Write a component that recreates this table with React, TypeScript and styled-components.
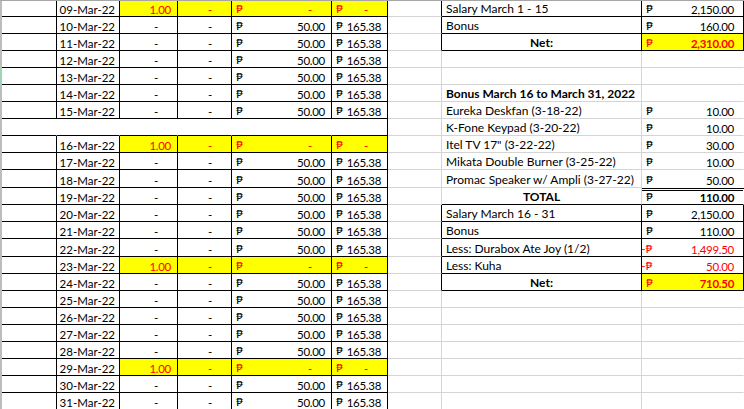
import React from "react";
import styled, { createGlobalStyle } from "styled-components";

const GlobalStyle = createGlobalStyle`
  html, body {
    margin: 0;
    padding: 0;
    background: #ffffff;
  }
  body {
    font-family: Lato, "Noto Sans", "DejaVu Sans", sans-serif;
  }
`;

const BLACK = "#000000";
const GRID = "#d4d4d4";
const YELLOW = "#ffff00";
const RED = "#ff0000";

// excel rows are not all the same height at this zoom
const ROW_HEIGHTS = [16, 17, 17, 17, 17, 17, 17, 17, 17, 17, 18, 17, 17, 17, 18, 17, 17, 17, 17, 17, 17, 17, 17, 17];
const COL_WIDTHS = [2, 55, 63, 58, 54, 100, 56, 54, 200, 102];

type Day = { date?: string; off?: boolean };

const days: Day[] = [
  { date: "09-Mar-22", off: true },
  { date: "10-Mar-22" },
  { date: "11-Mar-22" },
  { date: "12-Mar-22" },
  { date: "13-Mar-22" },
  { date: "14-Mar-22" },
  { date: "15-Mar-22" },
  {},
  { date: "16-Mar-22", off: true },
  { date: "17-Mar-22" },
  { date: "18-Mar-22" },
  { date: "19-Mar-22" },
  { date: "20-Mar-22" },
  { date: "21-Mar-22" },
  { date: "22-Mar-22" },
  { date: "23-Mar-22", off: true },
  { date: "24-Mar-22" },
  { date: "25-Mar-22" },
  { date: "26-Mar-22" },
  { date: "27-Mar-22" },
  { date: "28-Mar-22" },
  { date: "29-Mar-22", off: true },
  { date: "30-Mar-22" },
  { date: "31-Mar-22" },
];

type Line = {
  label?: string;
  amount?: string;
  center?: boolean;
  bold?: boolean;
  neg?: boolean;
  net?: boolean;
  box?: boolean;
  total?: boolean;
  open?: boolean;
};

const summary: Line[] = [
  { label: "Salary March 1 - 15", amount: "2,150.00", box: true },
  { label: "Bonus", amount: "160.00", box: true },
  { label: "Net:", amount: "2,310.00", center: true, bold: true, net: true, box: true },
  {},
  {},
  { label: "Bonus March 16 to March 31, 2022", bold: true },
  { label: "Eureka Deskfan (3-18-22)", amount: "10.00" },
  { label: "K-Fone Keypad (3-20-22)", amount: "10.00" },
  { label: 'Itel TV 17" (3-22-22)', amount: "30.00" },
  { label: "Mikata Double Burner (3-25-22)", amount: "10.00" },
  { label: "Promac Speaker w/ Ampli (3-27-22)", amount: "50.00", open: true },
  { label: "TOTAL", amount: "110.00", center: true, bold: true, total: true },
  { label: "Salary March 16 - 31", amount: "2,150.00", box: true },
  { label: "Bonus", amount: "110.00", box: true },
  { label: "Less: Durabox Ate Joy (1/2)", amount: "1,499.50", neg: true, box: true },
  { label: "Less: Kuha", amount: "50.00", neg: true, box: true },
  { label: "Net:", amount: "710.50", center: true, bold: true, net: true, box: true },
  {},
  {},
  {},
  {},
  {},
  {},
  {},
];

const Sheet = styled.div`
  display: grid;
  grid-template-columns: ${COL_WIDTHS.map((w) => `${w}px`).join(" ")};
  grid-template-rows: ${ROW_HEIGHTS.map((h) => `${h}px`).join(" ")};
  width: 744px;
  height: 409px;
  overflow: hidden;
  border-top: 1px solid #a6a6a6;
  font-size: 12px;
  color: ${BLACK};
`;

const RowHeader = styled.div<{ $selected?: boolean }>`
  background: ${(p) => (p.$selected ? "#9fd5b7" : "#bdbdbd")};
`;

type CellProps = {
  $right?: string;
  $bottom?: string;
  $doubleTop?: boolean;
  $bg?: string;
  $color?: string;
  $bold?: boolean;
  $align?: "left" | "center" | "right";
};

const Cell = styled.div<CellProps>`
  box-sizing: border-box;
  display: flex;
  align-items: flex-end;
  justify-content: ${(p) =>
    p.$align === "right" ? "flex-end" : p.$align === "center" ? "center" : "flex-start"};
  padding: 0 4px 1px 4px;
  border-top: ${(p) => (p.$doubleTop ? `3px double ${BLACK}` : "none")};
  border-right: 1px solid ${(p) => p.$right ?? "transparent"};
  border-bottom: 1px solid ${(p) => p.$bottom ?? "transparent"};
  background: ${(p) => p.$bg ?? "#ffffff"};
  color: ${(p) => p.$color ?? BLACK};
  font-weight: ${(p) => (p.$bold ? 700 : 400)};
  white-space: nowrap;
  overflow: hidden;
  line-height: 1;
`;

const DateCell = styled(Cell)`
  font-size: 11.5px;
`;

const Money = styled(Cell)<{ $padRight?: number }>`
  justify-content: space-between;
  padding-right: ${(p) => p.$padRight ?? 6}px;
`;

const Peso = styled.span<{ $neg?: boolean }>`
  font-family: Lato, "DejaVu Sans", sans-serif;
  font-size: 12px;
  font-weight: 400;
  margin-left: ${(p) => (p.$neg ? -5 : 0)}px;
`;

const Amount = styled.span<{ $zero?: boolean }>`
  margin-left: auto;
  margin-right: ${(p) => (p.$zero ? 13 : 0)}px;
  font-size: 11.5px;
  letter-spacing: -0.3px;
`;

function Figure({ value, peso, neg }: { value?: string; peso?: boolean; neg?: boolean }) {
  return (
    <>
      {peso && <Peso $neg={neg}>{neg ? "-₱" : "₱"}</Peso>}
      {value !== undefined && <Amount $zero={value === "-"}>{value}</Amount>}
    </>
  );
}

function DayRow({ day }: { day: Day }) {
  if (!day.date) {
    return (
      <>
        <Cell $bottom={BLACK} />
        <Cell $bottom={BLACK} />
        <Cell $bottom={BLACK} />
        <Cell $bottom={BLACK} />
        <Cell $bottom={BLACK} />
        <Cell $bottom={BLACK} $right={BLACK} />
      </>
    );
  }
  const edge = {
    $right: BLACK,
    $bottom: BLACK,
    $bg: day.off ? YELLOW : undefined,
    $color: day.off ? RED : undefined,
  };
  return (
    <>
      <Cell $right={BLACK} $bottom={BLACK} />
      <DateCell $right={BLACK} $bottom={BLACK} $align="right">
        {day.date}
      </DateCell>
      <Money {...edge}>
        <Figure value={day.off ? "1.00" : "-"} />
      </Money>
      <Money {...edge}>
        <Figure value="-" />
      </Money>
      <Money {...edge}>
        <Figure peso value={day.off ? "-" : "50.00"} />
      </Money>
      <Money {...edge}>
        <Figure peso value={day.off ? "-" : "165.38"} />
      </Money>
    </>
  );
}

function SummaryRow({ line }: { line: Line }) {
  const closed = line.box || line.total;
  return (
    <>
      <Cell $bottom={GRID} $right={line.box ? BLACK : GRID} />
      <Cell
        $bottom={closed ? BLACK : GRID}
        $right={line.box ? BLACK : GRID}
        $bold={line.bold}
        $align={line.center ? "center" : "left"}
      >
        {line.label}
      </Cell>
      <Money
        $padRight={9}
        $bottom={closed ? BLACK : line.open ? undefined : GRID}
        $doubleTop={line.total}
        $right={line.box ? BLACK : undefined}
        $bg={line.net ? YELLOW : undefined}
        $color={line.net || line.neg ? RED : undefined}
        $bold={line.bold}
      >
        {line.amount && <Figure peso neg={line.neg} value={line.amount} />}
      </Money>
    </>
  );
}

export default function App() {
  return (
    <>
      <GlobalStyle />
      <Sheet>
        {days.map((day, i) => (
          <React.Fragment key={i}>
            <RowHeader $selected={i === 4} />
            <DayRow day={day} />
            <SummaryRow line={summary[i]} />
          </React.Fragment>
        ))}
      </Sheet>
    </>
  );
}
